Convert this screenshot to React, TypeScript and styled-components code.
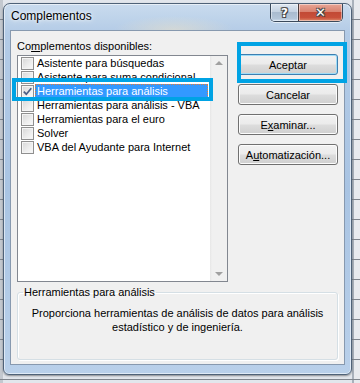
import React from "react";
import styled, { createGlobalStyle } from "styled-components";

const Global = createGlobalStyle`
  html, body { margin: 0; padding: 0; }
  body {
    width: 360px;
    height: 383px;
    overflow: hidden;
    font-family: "Liberation Sans", Arial, sans-serif;
    font-size: 11px;
    color: #000;
    background:
      repeating-linear-gradient(180deg, transparent 0 19px, #7f858d 19px 20px),
      linear-gradient(90deg, #c3c8cf 0 3px, #e2e6ec 3px 352px, #a9b1bb 352px 354px, #e8eaee 354px);
  }
`;

const Page = styled.div`
  width: 360px;
  height: 383px;
  padding: 3px 0 0 3px;
  box-sizing: border-box;
`;

const Window = styled.div`
  position: relative;
  width: 349px;
  height: 372px;
  box-sizing: border-box;
  border: 1px solid #4f6278;
  border-radius: 7px 7px 6px 6px;
  padding: 0 6px 9px 6px;
  display: flex;
  flex-direction: column;
  background:
    radial-gradient(ellipse 60px 14px at 170px 26px, rgba(235, 225, 200, 0.55), transparent),
    linear-gradient(180deg, #c9dbee 0%, #b3cbe6 8%, #a9c4e3 50%, #b9d0ea 100%);
  box-shadow: inset 0 0 0 1px rgba(255, 255, 255, 0.55), 0 1px 2px rgba(0, 0, 0, 0.4);
`;

const TitleBar = styled.div`
  height: 26px;
  display: flex;
  align-items: flex-start;
  justify-content: space-between;
  flex-shrink: 0;
`;

const Title = styled.div`
  padding: 5px 0 0 1px;
  font-size: 12px;
  line-height: 14px;
  color: #000;
  text-shadow: 0 0 6px rgba(255, 255, 255, 0.9), 0 0 3px rgba(255, 255, 255, 0.9);
`;

const CaptionButtons = styled.div`
  display: flex;
  margin-right: 2px;
  height: 17px;
  border: 1px solid #3b4a5c;
  border-top: none;
  border-radius: 0 0 5px 5px;
  overflow: hidden;
  box-shadow: 0 1px 0 rgba(255, 255, 255, 0.6);
`;

const CaptionButton = styled.div<{ $close?: boolean }>`
  width: ${(p) => (p.$close ? "43px" : "27px")};
  display: flex;
  align-items: center;
  justify-content: center;
  font-family: "DejaVu Sans", sans-serif;
  font-weight: bold;
  font-size: ${(p) => (p.$close ? "13px" : "12px")};
  color: #fff;
  text-shadow: 0 0 1px #333, 1px 1px 0 #444, -1px -1px 0 #555, 1px -1px 0 #555, -1px 1px 0 #555;
  border-left: ${(p) => (p.$close ? "1px solid #4a3a3a" : "none")};
  background: ${(p) =>
    p.$close
      ? "linear-gradient(180deg, #e8a595 0%, #d98270 45%, #c24a35 50%, #c8503a 80%, #de8a6a 100%)"
      : "linear-gradient(180deg, #dfe8f2 0%, #c4d2e2 45%, #a9bbcf 50%, #b3c5d8 85%, #cdddee 100%)"};
  box-shadow: inset 0 0 0 1px rgba(255, 255, 255, 0.45);
`;

const Client = styled.div`
  flex: 1;
  border: 1px solid #8799af;
  background: #f0f0f0;
  padding: 8px 6px 4px 6px;
  display: flex;
  flex-direction: column;
`;

const TopArea = styled.div`
  display: flex;
  justify-content: space-between;
`;

const LeftColumn = styled.div`
  display: flex;
  flex-direction: column;
  width: 211px;
`;

const Label = styled.div`
  height: 14px;
  line-height: 14px;
  margin: 0 0 2px 0;
`;

const U = styled.span`
  text-decoration: underline;
`;

const ListBox = styled.div`
  height: 227px;
  box-sizing: border-box;
  border: 1px solid #828790;
  background: #fff;
  display: flex;
`;

const Items = styled.div`
  flex: 1;
  display: flex;
  flex-direction: column;
`;

const Row = styled.div`
  height: 14px;
  display: flex;
  align-items: center;
  padding-left: 3px;
  margin-right: 2px;
  gap: 1px;
`;

const Box = styled.div`
  width: 13px;
  height: 13px;
  box-sizing: border-box;
  border: 1px solid #8f8f8f;
  background: linear-gradient(135deg, #d6d6d6 0%, #eeeeee 60%, #fafafa 100%);
  box-shadow: inset 0 0 0 1px #f4f4f4;
  display: flex;
  align-items: center;
  justify-content: center;
  flex-shrink: 0;
`;

const ItemText = styled.div<{ $selected?: boolean }>`
  flex: 1;
  height: 14px;
  box-sizing: border-box;
  line-height: 12px;
  padding: 0 0 0 1px;
  white-space: nowrap;
  color: ${(p) => (p.$selected ? "#fff" : "#000")};
  background: ${(p) => (p.$selected ? "#3399ff" : "transparent")};
  border: 1px ${(p) => (p.$selected ? "dotted #e07b3a" : "solid transparent")};
`;

const ScrollBar = styled.div`
  width: 17px;
  background: linear-gradient(90deg, #e6e6e6 0, #f0f0f0 2px, #f0f0f0 100%);
  display: flex;
  flex-direction: column;
  justify-content: space-between;
  align-items: center;
  padding: 5px 0;
  box-sizing: border-box;
`;

const Arrow = styled.div<{ $down?: boolean }>`
  width: 0;
  height: 0;
  border-left: 4px solid transparent;
  border-right: 4px solid transparent;
  ${(p) => (p.$down ? "border-top: 4px solid #a0a0a0;" : "border-bottom: 4px solid #a0a0a0;")}
`;

const ButtonColumn = styled.div`
  display: flex;
  flex-direction: column;
  gap: 9px;
  padding-top: 15px;
`;

const Button = styled.div<{ $default?: boolean }>`
  width: 100px;
  height: 21px;
  box-sizing: border-box;
  border: 1px solid ${(p) => (p.$default ? "#3c7fb1" : "#707070")};
  border-radius: 3px;
  display: flex;
  align-items: center;
  justify-content: center;
  line-height: 14px;
  background: linear-gradient(180deg, #f2f2f2 0%, #ebebeb 48%, #dddddd 52%, #cfcfcf 100%);
  box-shadow: inset 0 0 0 1px ${(p) => (p.$default ? "#9fdcf7" : "#fcfcfc")};
`;

const Group = styled.fieldset`
  margin: 3px 0 0 0;
  padding: 7px 4px 0 4px;
  height: 75px;
  box-sizing: border-box;
  border: 1px solid #d5dfe5;
  border-radius: 3px;
  box-shadow: inset 1px 1px 0 #fff, 1px 1px 0 #fff;
`;

const Legend = styled.legend`
  padding: 0 1px;
  margin-left: 1px;
  line-height: 14px;
`;

const Description = styled.div`
  text-align: center;
  line-height: 14px;
  white-space: nowrap;
`;

const Highlight = styled.div<{ $l: number; $t: number; $w: number; $h: number }>`
  position: absolute;
  left: ${(p) => p.$l}px;
  top: ${(p) => p.$t}px;
  width: ${(p) => p.$w}px;
  height: ${(p) => p.$h}px;
  box-sizing: border-box;
  border: 4px solid #00a3e4;
  pointer-events: none;
`;

const Check = () => (
  <svg width="11" height="11" viewBox="0 0 11 11">
    <path d="M1.8 5.6 L4.3 8.2 L9.3 2.2" fill="none" stroke="#4b5f86" strokeWidth="1.7" />
  </svg>
);

const items = [
  { label: "Asistente para búsquedas" },
  { label: "Asistente para suma condicional" },
  { label: "Herramientas para análisis", checked: true, selected: true },
  { label: "Herramientas para análisis - VBA" },
  { label: "Herramientas para el euro" },
  { label: "Solver" },
  { label: "VBA del Ayudante para Internet" },
];

export default function App() {
  return (
    <>
      <Global />
      <Page>
        <Window>
          <TitleBar>
            <Title>Complementos</Title>
            <CaptionButtons>
              <CaptionButton>?</CaptionButton>
              <CaptionButton $close>✕</CaptionButton>
            </CaptionButtons>
          </TitleBar>
          <Client>
            <TopArea>
              <LeftColumn>
                <Label>
                  Co<U>m</U>plementos disponibles:
                </Label>
                <ListBox>
                  <Items>
                    {items.map((it) => (
                      <Row key={it.label}>
                        <Box>{it.checked && <Check />}</Box>
                        <ItemText $selected={it.selected}>{it.label}</ItemText>
                      </Row>
                    ))}
                  </Items>
                  <ScrollBar>
                    <Arrow />
                    <Arrow $down />
                  </ScrollBar>
                </ListBox>
              </LeftColumn>
              <ButtonColumn>
                <Button $default>Aceptar</Button>
                <Button>Cancelar</Button>
                <Button>
                  E<U>x</U>aminar...
                </Button>
                <Button>
                  A<U>u</U>tomatización...
                </Button>
              </ButtonColumn>
            </TopArea>
            <Group>
              <Legend>Herramientas para análisis</Legend>
              <Description>
                Proporciona herramientas de análisis de datos para análisis
                <br />
                estadístico y de ingeniería.
              </Description>
            </Group>
          </Client>
          <Highlight $l={8} $t={74} $w={201} $h={23} />
          <Highlight $l={233} $t={38} $w={110} $h={41} />
        </Window>
      </Page>
    </>
  );
}
